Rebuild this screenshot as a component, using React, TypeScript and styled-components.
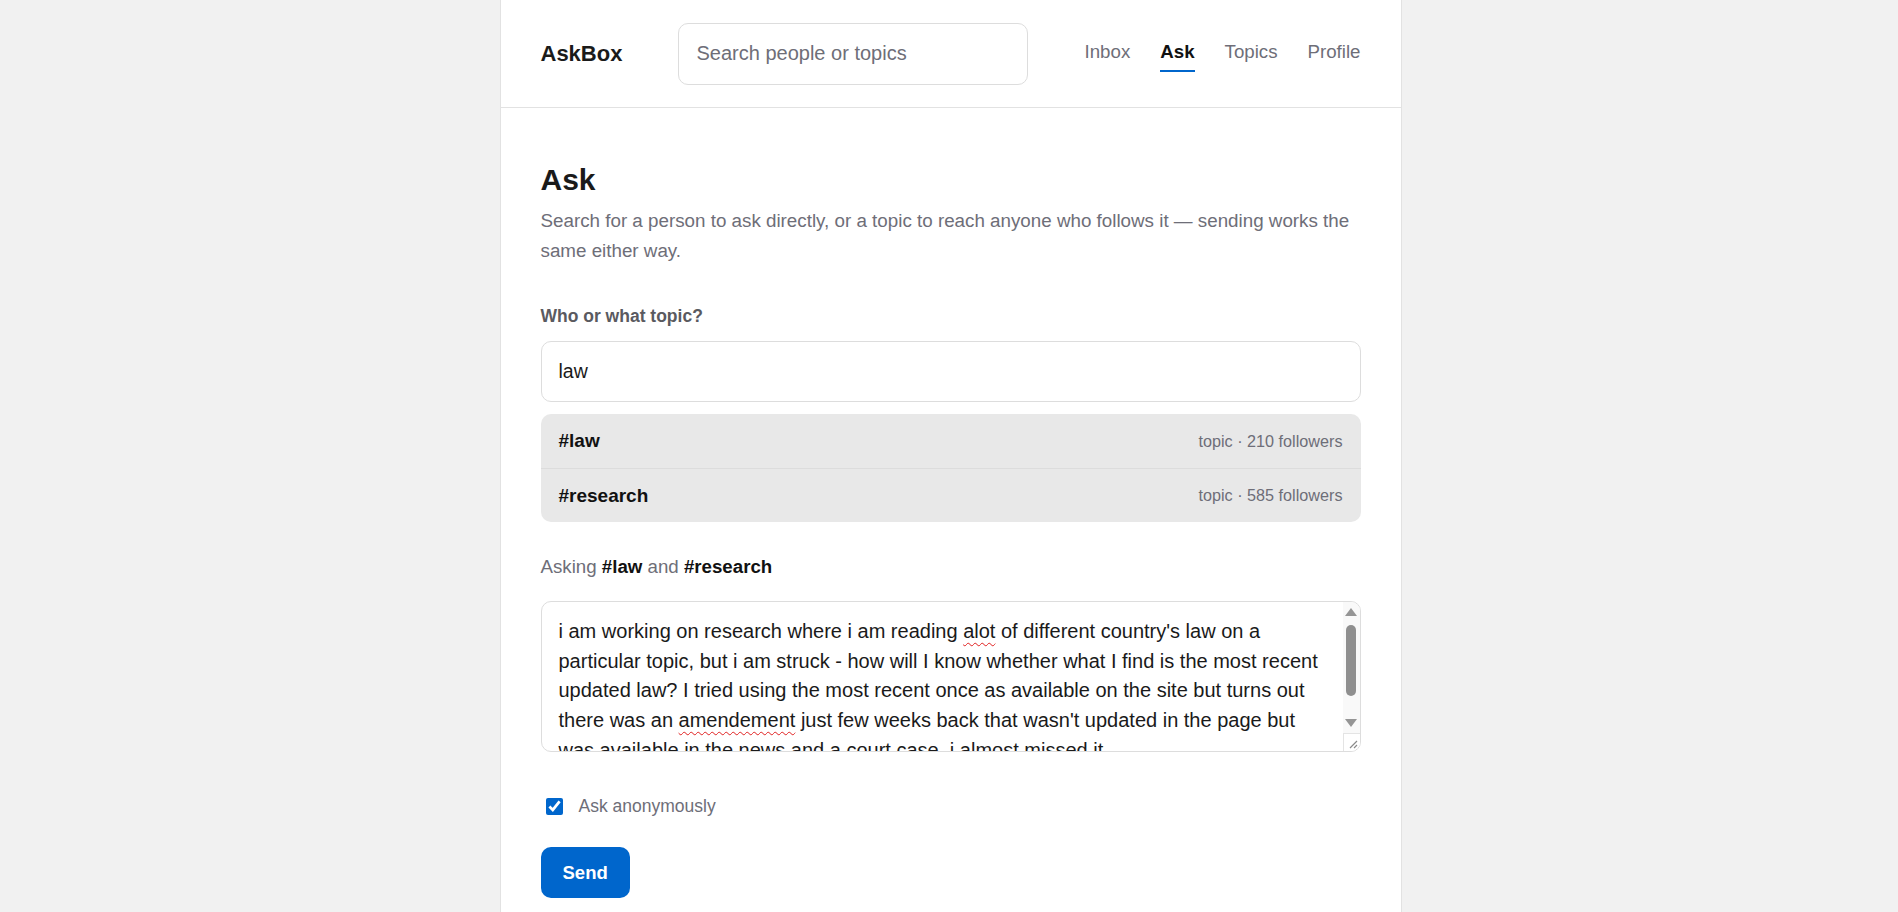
import React from 'react';
import styled, { createGlobalStyle, css } from 'styled-components';

const GlobalStyle = createGlobalStyle`
    html, body {
        margin: 0;
        padding: 0;
        background: #f1f1f1;
        font-family: 'Liberation Sans', Arial, sans-serif;
        color: #1a1a1a;
    }
    body {
        padding-left: 3px;
    }
    * {
        box-sizing: border-box;
    }
`;

const Shell = styled.div`
    width: 902px;
    min-height: 912px;
    margin: 0 auto;
    background: #ffffff;
    border-left: 1px solid #e2e2e2;
    border-right: 1px solid #e2e2e2;
`;

const Header = styled.header`
    height: 108px;
    display: flex;
    align-items: center;
    padding: 0 40px;
    border-bottom: 1px solid #e2e2e2;
`;

const Logo = styled.div`
    width: 137px;
    font-size: 22px;
    font-weight: 700;
    color: #1a1a1a;
`;

const SearchInput = styled.input`
    width: 350px;
    height: 62px;
    padding: 0 18px;
    border: 1px solid #dddddd;
    border-radius: 10px;
    font-family: inherit;
    font-size: 20px;
    color: #1a1a1a;
    outline: none;

    &::placeholder {
        color: #6e6e78;
    }
`;

const Nav = styled.nav`
    margin-left: auto;
    display: flex;
    gap: 30px;
`;

const NavLink = styled.a<{ $active?: boolean }>`
    padding: 5px 0 7px;
    border-bottom: 2px solid transparent;
    font-size: 18.7px;
    color: #6e6e78;
    text-decoration: none;
    cursor: pointer;
    ${({ $active }) =>
        $active &&
        css`
            color: #111111;
            font-weight: 700;
            border-bottom-color: #0066cc;
        `}
`;

const Main = styled.main`
    padding: 54px 40px 14px;
`;

const Title = styled.h1`
    margin: 0;
    font-size: 30px;
    line-height: 36px;
    font-weight: 700;
    color: #1a1a1a;
`;

const Lead = styled.p`
    margin: 8px 0 0;
    font-size: 18.8px;
    line-height: 29.5px;
    color: #6e6e78;
`;

const FieldLabel = styled.label`
    display: block;
    margin: 41px 0 14px;
    font-size: 17.5px;
    font-weight: 700;
    color: #5a5a60;
`;

const TargetInput = styled.input`
    display: block;
    width: 100%;
    height: 61px;
    padding: 0 17px;
    border: 1px solid #dddddd;
    border-radius: 10px;
    font-family: inherit;
    font-size: 19.5px;
    color: #1a1a1a;
    outline: none;
`;

const Suggestions = styled.ul`
    list-style: none;
    margin: 12px 0 0;
    padding: 0;
    background: #e8e8e8;
    border-radius: 10px;
    overflow: hidden;
`;

const Suggestion = styled.li`
    height: 54px;
    display: flex;
    align-items: center;
    justify-content: space-between;
    padding: 0 18px;

    & + & {
        border-top: 1px solid #dcdcdc;
    }
`;

const Tag = styled.span`
    font-size: 19px;
    font-weight: 700;
    color: #111111;
`;

const Meta = styled.span`
    font-size: 16.2px;
    color: #6e6e78;
`;

const Recipients = styled.div`
    margin-top: 34px;
    font-size: 18.7px;
    color: #6e6e78;

    b {
        color: #111111;
    }
`;

const MessageBox = styled.div`
    position: relative;
    margin-top: 23px;
    height: 151px;
    border: 1px solid #dddddd;
    border-radius: 10px;
    overflow: hidden;
`;

const MessageText = styled.div`
    height: 100%;
    padding: 15px 34px 15px 17px;
    overflow: hidden;
    font-size: 20px;
    line-height: 29.7px;
    color: #1a1a1a;
    outline: none;
`;

const Misspelt = styled.span`
    text-decoration: underline wavy #e02020;
    text-decoration-thickness: 1px;
    text-underline-offset: 4px;
    text-decoration-skip-ink: none;
`;

const ScrollBar = styled.div`
    position: absolute;
    top: 0;
    right: 0;
    bottom: 0;
    width: 17px;
    display: flex;
    flex-direction: column;
    background: #f9f9f9;
`;

const ScrollButton = styled.div`
    height: 20px;
    display: flex;
    align-items: center;
    justify-content: center;
    color: #959595;
`;

const ScrollTrack = styled.div`
    flex: 1;
    display: flex;
    justify-content: center;
    padding-top: 3px;
`;

const ScrollThumb = styled.div`
    width: 10px;
    height: 71px;
    border-radius: 5px;
    background: #8f8f8f;
`;

const ResizeCorner = styled.div`
    height: 18px;
    display: flex;
    align-items: flex-end;
    justify-content: flex-end;
    padding: 0 2px 2px 0;
    background: #ffffff;
    border-top: 1px solid #e4e4e4;
    border-left: 1px solid #e4e4e4;
`;

const CheckRow = styled.label`
    margin-top: 44px;
    display: flex;
    align-items: center;
    gap: 16px;
    font-size: 17.5px;
    color: #6e6e78;
    cursor: pointer;
`;

const Checkbox = styled.input`
    width: 17px;
    height: 17px;
    margin: 0 0 0 5px;
    accent-color: #0066cc;
`;

const SendButton = styled.button`
    margin-top: 30px;
    height: 51px;
    padding: 0 22px;
    border: none;
    border-radius: 10px;
    background: #0066cc;
    color: #ffffff;
    font-family: inherit;
    font-size: 18.5px;
    font-weight: 700;
    cursor: pointer;
`;

const suggestions = [
    { tag: '#law', followers: 210 },
    { tag: '#research', followers: 585 },
];

const Arrow = ({ down }: { down?: boolean }) => (
    <svg width="12" height="8" viewBox="0 0 12 8" aria-hidden="true">
        <path d={down ? 'M0 0H12L6 8Z' : 'M6 0L12 8H0Z'} fill="currentColor" />
    </svg>
);

export default function App() {
    const [anonymous, setAnonymous] = React.useState(true);

    return (
        <>
            <GlobalStyle />
            <Shell>
                <Header>
                    <Logo>AskBox</Logo>
                    <SearchInput placeholder="Search people or topics" />
                    <Nav>
                        <NavLink>Inbox</NavLink>
                        <NavLink $active>Ask</NavLink>
                        <NavLink>Topics</NavLink>
                        <NavLink>Profile</NavLink>
                    </Nav>
                </Header>
                <Main>
                    <Title>Ask</Title>
                    <Lead>
                        Search for a person to ask directly, or a topic to reach anyone who follows it — sending works
                        the same either way.
                    </Lead>
                    <FieldLabel htmlFor="target">Who or what topic?</FieldLabel>
                    <TargetInput id="target" defaultValue="law" />
                    <Suggestions>
                        {suggestions.map((s) => (
                            <Suggestion key={s.tag}>
                                <Tag>{s.tag}</Tag>
                                <Meta>topic · {s.followers} followers</Meta>
                            </Suggestion>
                        ))}
                    </Suggestions>
                    <Recipients>
                        Asking <b>#law</b> and <b>#research</b>
                    </Recipients>
                    <MessageBox>
                        <MessageText
                            role="textbox"
                            aria-multiline="true"
                            contentEditable
                            suppressContentEditableWarning
                            spellCheck={false}
                        >
                            i am working on research where i am reading <Misspelt>alot</Misspelt> of different
                            country's law on a particular topic, but i am struck - how will I know whether what I find
                            is the most recent updated law? I tried using the most recent once as available on the site
                            but turns out there was an <Misspelt>amendement</Misspelt> just few weeks back that wasn't
                            updated in the page but was available in the news and a court case, i almost missed it.
                            <br />
                            How do you keep track of the latest version of a law?
                        </MessageText>
                        <ScrollBar aria-hidden="true">
                            <ScrollButton>
                                <Arrow />
                            </ScrollButton>
                            <ScrollTrack>
                                <ScrollThumb />
                            </ScrollTrack>
                            <ScrollButton>
                                <Arrow down />
                            </ScrollButton>
                            <ResizeCorner>
                                <svg width="9" height="9" viewBox="0 0 9 9">
                                    <path d="M1 8L8 1M5 8L8 5" stroke="#8a8a8a" strokeWidth="1.2" />
                                </svg>
                            </ResizeCorner>
                        </ScrollBar>
                    </MessageBox>
                    <CheckRow>
                        <Checkbox type="checkbox" checked={anonymous} onChange={(e) => setAnonymous(e.target.checked)} />
                        Ask anonymously
                    </CheckRow>
                    <SendButton>Send</SendButton>
                </Main>
            </Shell>
        </>
    );
}
